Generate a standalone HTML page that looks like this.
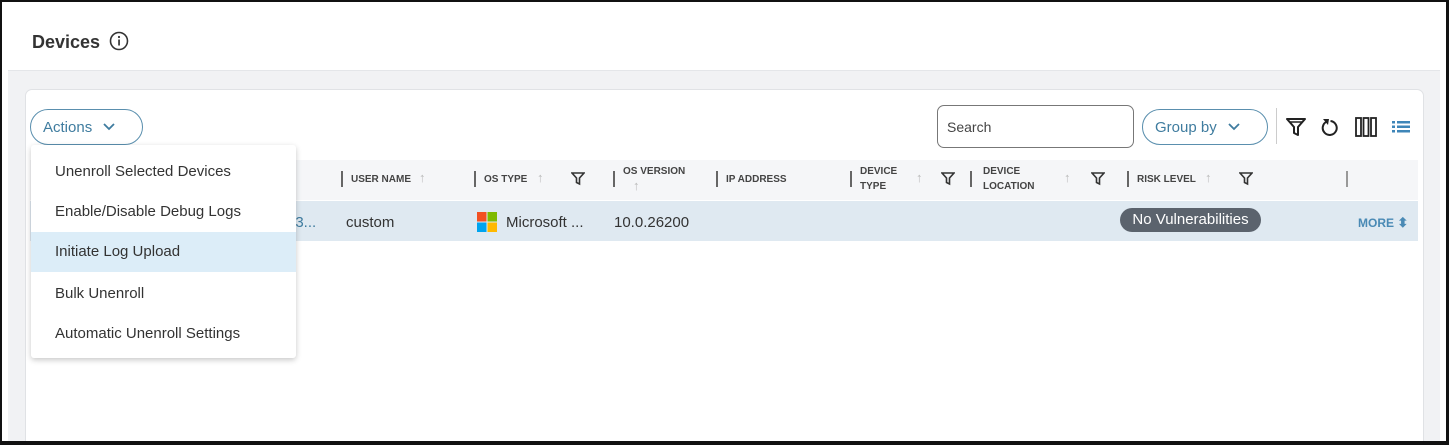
<!DOCTYPE html>
<html><head><meta charset="utf-8"><style>
*{box-sizing:border-box;margin:0;padding:0}
html,body{width:1449px;height:445px;overflow:hidden}
body{background:#fff;font-family:"Liberation Sans",sans-serif;position:relative;color:#333}
.frame{position:absolute;left:0;top:0;width:1449px;height:445px;border:2px solid #111;border-right-width:3px;border-bottom-width:4px;z-index:50;pointer-events:none}
.gray{position:absolute;left:8px;top:70px;width:1432px;height:371px;background:#f1f2f4;border-top:1px solid #e4e6e9}
.card{position:absolute;left:25px;top:89px;width:1399px;height:360px;background:#fff;border:1px solid #e0e2e5;border-radius:7px}
.abs{position:absolute}
.title{left:32px;top:32px;font-size:18px;font-weight:bold;color:#333}
.hdr{left:30px;top:160px;width:1388px;height:40px;background:#f5f6f8}
.row{left:30px;top:201px;width:1388px;height:40px;background:#dfe9f1}
.h{position:absolute;font-size:10px;font-weight:bold;color:#444;line-height:15px}
.sep{position:absolute;width:1.5px;height:16px;background:#666}
.arr{position:absolute;color:#bbb;font-size:13px}
.cell{position:absolute;font-size:15px;color:#333;top:214px}
.dd{left:31px;top:145px;width:265px;height:213px;background:#fff;box-shadow:0 2px 6px rgba(0,0,0,.22);border-radius:3px}
.it{position:absolute;left:0;width:265px;height:40px;font-size:15px;color:#333;padding-left:24px;line-height:40px}
</style></head><body>
<div class="gray"></div>
<div class="card"></div>
<div class="abs title">Devices</div>
<svg class="abs" style="left:109px;top:31px" width="20" height="20" viewBox="0 0 20 20"><circle cx="10" cy="10" r="8.5" fill="none" stroke="#333" stroke-width="1.6"/><rect x="9.2" y="8.5" width="1.7" height="6" fill="#333"/><circle cx="10" cy="6" r="1.1" fill="#333"/></svg>
<div class="abs" style="left:30px;top:109px;width:113px;height:36px;border:1.5px solid #5a8fae;border-radius:18px;color:#3f7c9f;font-size:15px;line-height:35px;padding-left:12px">Actions <svg width="14" height="10" style="margin-left:6px" viewBox="0 0 14 10"><path d="M2 2l5 5 5-5" fill="none" stroke="#3f7c9f" stroke-width="1.8"/></svg></div>
<div class="abs" style="left:937px;top:105px;width:197px;height:43px;border:1px solid #777;border-radius:7px;font-size:14px;line-height:43px;padding-left:9px;color:#444">Search</div>
<div class="abs" style="left:1142px;top:109px;width:126px;height:36px;border:1.5px solid #5a8fae;border-radius:18px;color:#3f7c9f;font-size:15px;line-height:35px;padding-left:12px">Group by <svg width="14" height="10" style="margin-left:6px" viewBox="0 0 14 10"><path d="M2 2l5 5 5-5" fill="none" stroke="#3f7c9f" stroke-width="1.8"/></svg></div>
<div class="abs" style="left:1276px;top:108px;width:1px;height:36px;background:#ccc"></div>
<svg class="abs" style="left:1285px;top:116px" width="22" height="22" viewBox="0 0 22 22"><path d="M2 3h18l-7 8v8l-4-2v-6z" fill="none" stroke="#222" stroke-width="2" stroke-linejoin="round"/><path d="M5 6h12" stroke="#222" stroke-width="1.5"/></svg>
<svg class="abs" style="left:1320px;top:116px" width="20" height="22" viewBox="0 0 20 22"><path d="M7 5.5a7 7 0 1 0 3.5 -0.5" fill="none" stroke="#222" stroke-width="2"/><path d="M3 3l6 0l-1 6z" fill="#222"/></svg>
<svg class="abs" style="left:1355px;top:116px" width="22" height="22" viewBox="0 0 22 22"><rect x="1" y="2" width="5" height="18" fill="none" stroke="#222" stroke-width="1.8"/><rect x="8.5" y="2" width="5" height="18" fill="none" stroke="#222" stroke-width="1.8"/><rect x="16" y="2" width="5" height="18" fill="none" stroke="#222" stroke-width="1.8"/></svg>
<svg class="abs" style="left:1392px;top:120px" width="18" height="14" viewBox="0 0 18 14"><g fill="#3f86b8"><rect x="0" y="1" width="3" height="2.5"/><rect x="0" y="5.5" width="3" height="2.5"/><rect x="0" y="10" width="3" height="2.5"/><rect x="5" y="1" width="13" height="2.5"/><rect x="5" y="5.5" width="13" height="2.5"/><rect x="5" y="10" width="13" height="2.5"/></g></svg>
<div class="abs hdr"></div>
<div class="abs row"></div>
<div class="sep" style="left:341px;top:171px"></div><div class="h" style="left:351px;top:172px">USER NAME</div><div class="arr" style="left:419px;top:170px">↑</div>
<div class="sep" style="left:474px;top:171px"></div><div class="h" style="left:484px;top:172px">OS TYPE</div><div class="arr" style="left:537px;top:170px">↑</div>
<svg class="abs" style="left:571px;top:172px" width="14" height="14" viewBox="0 0 14 14"><path d="M1 1h12l-4.5 5v6l-3-1.5v-4.5z" fill="none" stroke="#333" stroke-width="1.6"/></svg>
<div class="sep" style="left:613px;top:171px"></div><div class="h" style="left:623px;top:164px">OS VERSION</div><div class="arr" style="left:633px;top:178px">↑</div>
<div class="sep" style="left:716px;top:171px"></div><div class="h" style="left:726px;top:172px">IP ADDRESS</div>
<div class="sep" style="left:850px;top:171px"></div><div class="h" style="left:860px;top:164px">DEVICE<br>TYPE</div><div class="arr" style="left:916px;top:170px">↑</div>
<svg class="abs" style="left:941px;top:172px" width="14" height="14" viewBox="0 0 14 14"><path d="M1 1h12l-4.5 5v6l-3-1.5v-4.5z" fill="none" stroke="#333" stroke-width="1.6"/></svg>
<div class="sep" style="left:970px;top:171px"></div><div class="h" style="left:983px;top:164px">DEVICE<br>LOCATION</div><div class="arr" style="left:1064px;top:170px">↑</div>
<svg class="abs" style="left:1091px;top:172px" width="14" height="14" viewBox="0 0 14 14"><path d="M1 1h12l-4.5 5v6l-3-1.5v-4.5z" fill="none" stroke="#333" stroke-width="1.6"/></svg>
<div class="sep" style="left:1127px;top:171px"></div><div class="h" style="left:1137px;top:172px">RISK LEVEL</div><div class="arr" style="left:1205px;top:170px">↑</div>
<svg class="abs" style="left:1239px;top:172px" width="14" height="14" viewBox="0 0 14 14"><path d="M1 1h12l-4.5 5v6l-3-1.5v-4.5z" fill="none" stroke="#333" stroke-width="1.6"/></svg>
<div class="sep" style="left:1346px;top:171px;background:#999"></div>
<div class="cell" style="left:287px;color:#3f7c9f">33...</div>
<div class="cell" style="left:346px">custom</div>
<svg class="abs" style="left:477px;top:212px" width="20" height="20" viewBox="0 0 20 20"><rect x="0" y="0" width="9.5" height="9.5" fill="#f25022"/><rect x="10.5" y="0" width="9.5" height="9.5" fill="#7fba00"/><rect x="0" y="10.5" width="9.5" height="9.5" fill="#00a4ef"/><rect x="10.5" y="10.5" width="9.5" height="9.5" fill="#ffb900"/></svg>
<div class="cell" style="left:506px">Microsoft ...</div>
<div class="cell" style="left:614px">10.0.26200</div>
<div class="abs" style="left:1120px;top:208px;width:141px;height:24px;background:#5b636d;border-radius:12px;color:#fff;font-size:15px;line-height:24px;text-align:center">No Vulnerabilities</div>
<div class="abs" style="left:1358px;top:215px;font-size:12px;font-weight:bold;color:#4a8ab5">MORE <span style="font-size:13px">⬍</span></div>
<div class="abs dd">
<div class="it" style="top:7px">Unenroll Selected Devices</div>
<div class="it" style="top:47px">Enable/Disable Debug Logs</div>
<div class="it" style="top:87px;background:#dcedf8">Initiate Log Upload</div>
<div class="it" style="top:129px">Bulk Unenroll</div>
<div class="it" style="top:169px">Automatic Unenroll Settings</div>
</div>
<div class="frame"></div>
</body></html>
